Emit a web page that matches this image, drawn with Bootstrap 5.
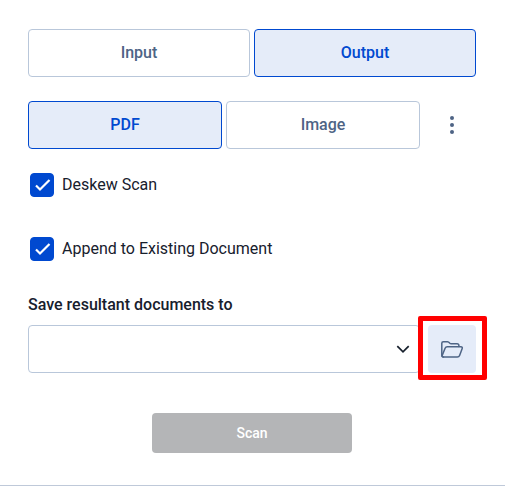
<!DOCTYPE html>
<html lang="en">
<head>
<meta charset="utf-8">
<meta name="viewport" content="width=device-width, initial-scale=1">
<title>Scan settings</title>
<link href="https://cdn.jsdelivr.net/npm/bootstrap@5.3.0/dist/css/bootstrap.min.css" rel="stylesheet">
<style>
body { font-family: Roboto, "Liberation Sans", sans-serif; font-size: 16px; line-height: 24px; color: #17202d; background: #fff; }
.scan-panel { min-height: 100vh; padding: 29px 29px 32px 28px; border-bottom: 1px solid #bfc9d9; }
.tab-btn { height: 48px; padding: 0; font-size: 16px; font-weight: 500; color: #4e6485; background: #fff; border: 1px solid #b9c7da; border-radius: 4px; }
.tab-btn.active, .tab-btn:hover { color: #0049d0 !important; background: #e5ecf9 !important; border-color: #0049d0 !important; }
.square-btn { width: 48px; height: 48px; padding: 0; border: 0; border-radius: 4px; color: #4e6485; }
.folder-btn { background: #e5ecf9; }
.option-row { min-height: 24px; padding-left: 2px; }
.option-row .form-check-input { width: 24px; height: 24px; border-radius: 4px; }
.option-row .form-check-input:checked {
  background-color: #0049d0; border-color: #0049d0; background-size: 24px 24px;
  background-image: url("data:image/svg+xml,%3csvg xmlns='http://www.w3.org/2000/svg' viewBox='0 0 24 24'%3e%3cpath fill='none' stroke='%23fff' stroke-width='2.2' d='M6 12.500l4 4 9.500-9.500'/%3e%3c/svg%3e");
}
.options { margin: 24px 0 32px; gap: 40px; }
.path-select {
  height: 48px; border: 1px solid #b9c7da; border-radius: 4px; background-size: 14px 14px; background-position: right 9px center;
  background-image: url("data:image/svg+xml,%3csvg xmlns='http://www.w3.org/2000/svg' viewBox='0 0 14 14'%3e%3cpath fill='none' stroke='%2317202d' stroke-width='1.7' d='M1.3 4.2L7 9.8l5.700-5.600'/%3e%3c/svg%3e");
}
.marked-area::after { content: ""; position: absolute; inset: -9px -11px -7px -10px; border: 5px solid #f00; border-radius: 2px; pointer-events: none; }
.scan-btn { width: 200px; height: 40px; padding: 0; font-size: 14px; font-weight: 500; border: 0; border-radius: 4px; }
.scan-btn:disabled { color: #fff; background: #b4b5b7; opacity: 1; }
</style>
</head>
<body>
<main class="scan-panel d-flex flex-column">
  <div class="d-flex gap-1 mb-4">
    <button type="button" class="btn tab-btn flex-fill w-50">Input</button>
    <button type="button" class="btn tab-btn flex-fill w-50 active">Output</button>
  </div>
  <div class="d-flex gap-2">
    <div class="d-flex gap-1 flex-grow-1">
      <button type="button" class="btn tab-btn flex-fill w-50 active">PDF</button>
      <button type="button" class="btn tab-btn flex-fill w-50">Image</button>
    </div>
    <button type="button" class="btn square-btn d-flex align-items-center justify-content-center" aria-label="More formats">
      <svg width="24" height="24" viewBox="0 0 24 24" fill="currentColor" aria-hidden="true"><circle cx="12" cy="5" r="2"/><circle cx="12" cy="12" r="2"/><circle cx="12" cy="19" r="2"/></svg>
    </button>
  </div>
  <div class="options d-flex flex-column">
    <div class="option-row d-flex align-items-center gap-2">
      <input class="form-check-input m-0" type="checkbox" id="deskew" checked>
      <label for="deskew">Deskew Scan</label>
    </div>
    <div class="option-row d-flex align-items-center gap-2">
      <input class="form-check-input m-0" type="checkbox" id="append" checked>
      <label for="append">Append to Existing Document</label>
    </div>
  </div>
  <label for="destination" class="fw-medium mb-2">Save resultant documents to</label>
  <div class="d-flex gap-2">
    <select class="form-select path-select flex-grow-1" id="destination"><option></option></select>
    <div class="marked-area position-relative">
      <button type="button" class="btn square-btn folder-btn d-flex align-items-center justify-content-center" aria-label="Browse folders">
        <svg width="24" height="24" viewBox="0 0 24 24" fill="none" stroke="currentColor" stroke-width="1.5" stroke-linejoin="round" stroke-linecap="round" aria-hidden="true"><path d="M3.500 20C2.400 20 1.800 19.300 1.800 18.300V6.300C1.800 5.300 2.400 4.800 3.300 4.800H7.500C8.500 4.800 9 5.200 9.600 6C10.100 6.600 10.500 6.800 11.300 6.800H17C18.200 6.800 18.900 7.600 18.900 8.600V9.600"/><path d="M3.300 20H17.300C18.500 20 19.200 19.500 19.600 18.500L22.200 11.600C22.600 10.500 22 9.800 20.900 9.800H7.300C6.200 9.800 5.500 10.200 5.100 11.200L2.200 18.400C1.900 19.300 2.300 20 3.300 20Z"/></svg>
      </button>
    </div>
  </div>
  <button type="button" class="btn scan-btn align-self-center mt-auto" disabled>Scan</button>
</main>
<script src="https://cdn.jsdelivr.net/npm/bootstrap@5.3.0/dist/js/bootstrap.bundle.min.js"></script>
</body>
</html>
